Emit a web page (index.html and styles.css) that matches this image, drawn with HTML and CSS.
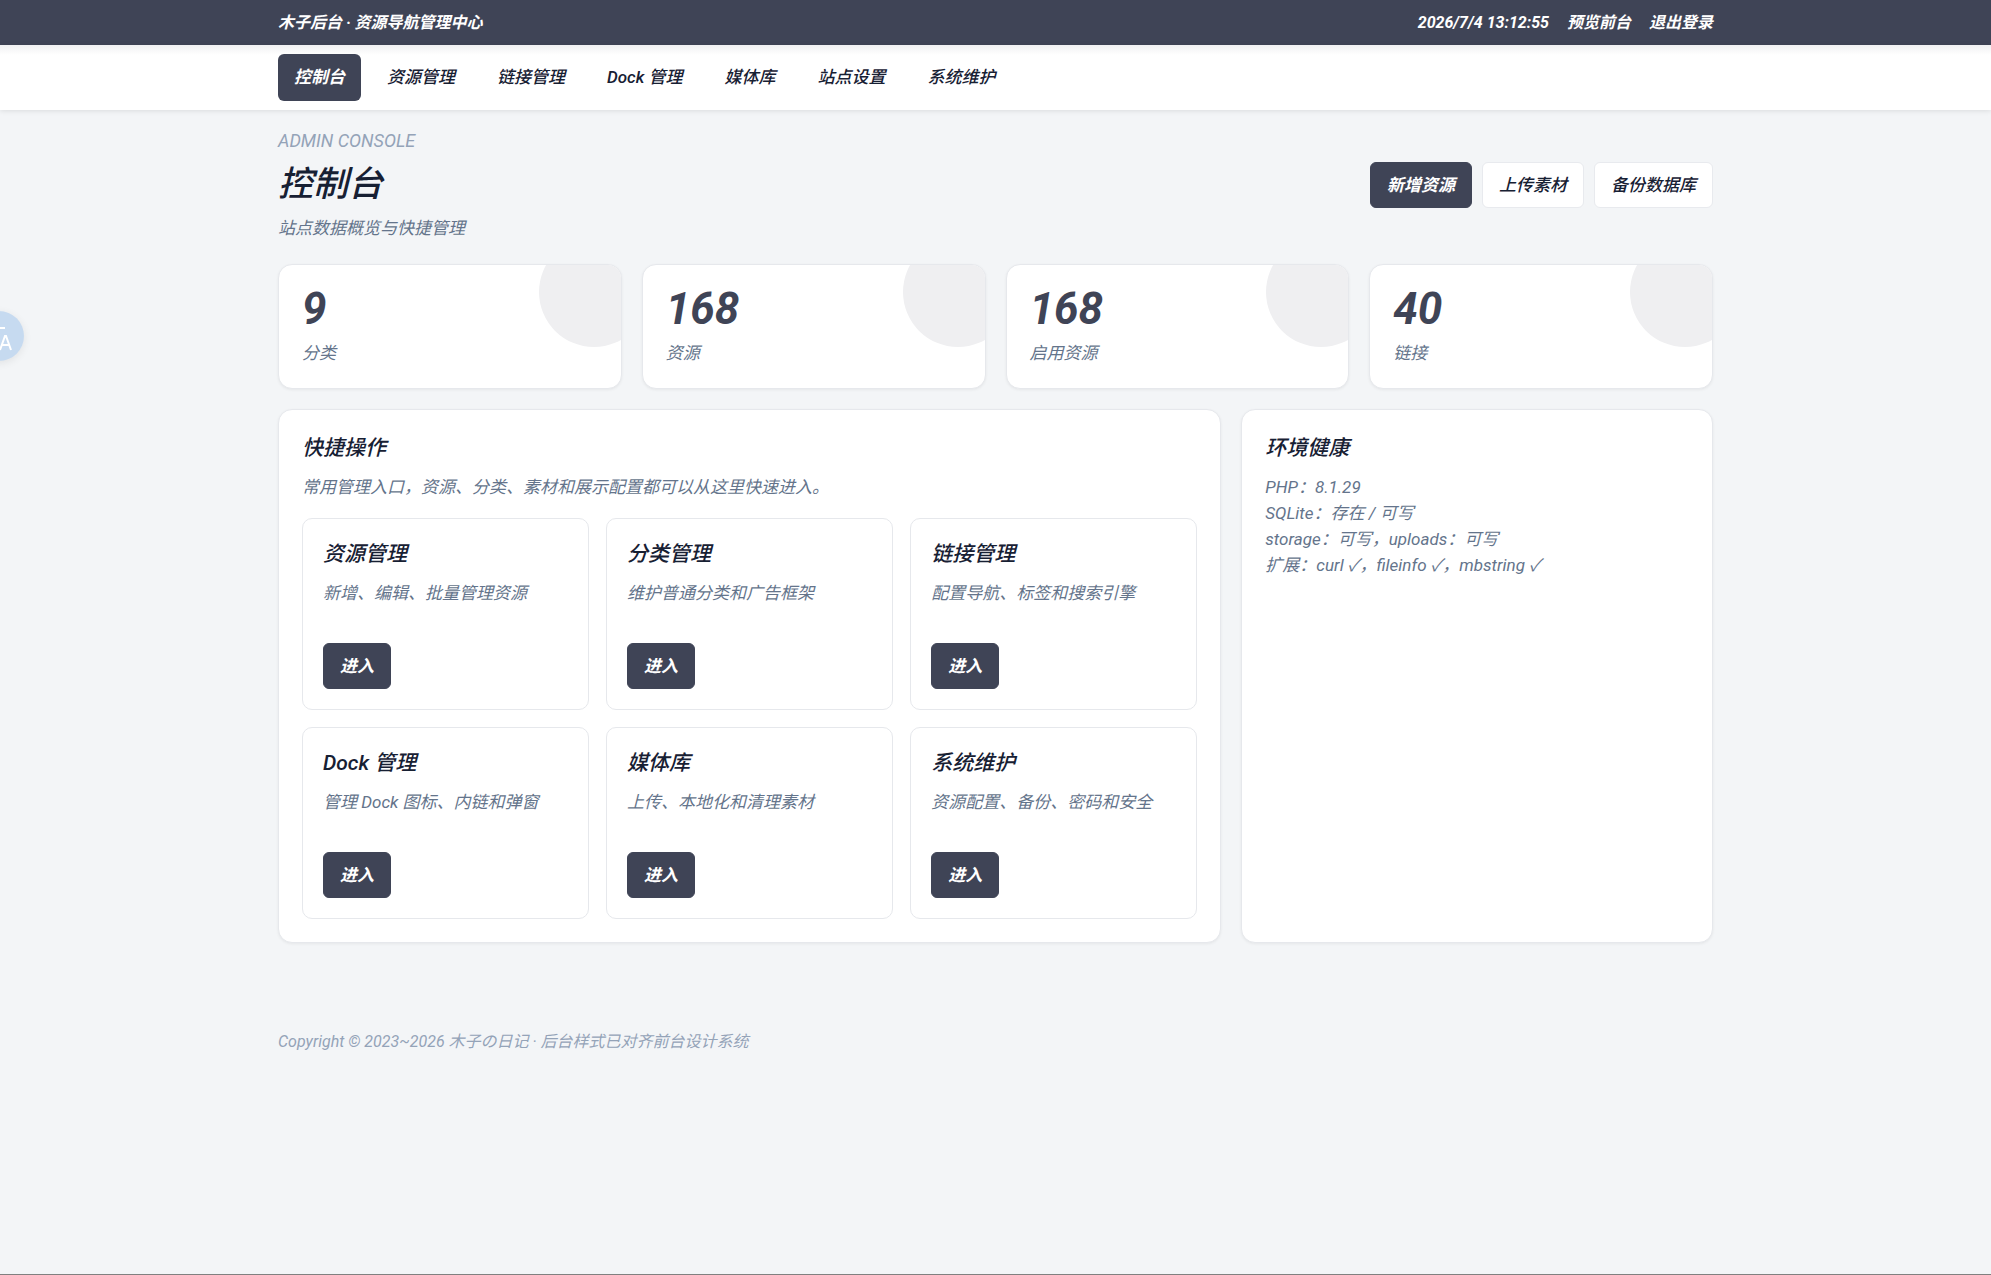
FILE: index.html
```html
<!DOCTYPE html>
<html lang="zh-CN">
<head>
    <meta charset="UTF-8">
    <meta name="viewport" content="width=device-width, initial-scale=1.0">
    <title>控制台 - 木子后台</title>
    <link rel="stylesheet" href="styles.css">
</head>
<body>

<div class="topbar">
    <div class="container topbar-inner">
        <span>木子后台 · 资源导航管理中心</span>
        <div class="topbar-right">
            <span>2026/7/4 13:12:55</span>
            <a href="#">预览前台</a>
            <a href="#">退出登录</a>
        </div>
    </div>
</div>

<header class="navbar">
    <nav class="container nav">
        <a class="active" href="#">控制台</a>
        <a href="#">资源管理</a>
        <a href="#">链接管理</a>
        <a href="#">Dock 管理</a>
        <a href="#">媒体库</a>
        <a href="#">站点设置</a>
        <a href="#">系统维护</a>
    </nav>
</header>

<main class="container main">
    <div class="page-head">
        <div>
            <div class="eyebrow">ADMIN CONSOLE</div>
            <h1>控制台</h1>
            <p class="muted">站点数据概览与快捷管理</p>
        </div>
        <div class="actions">
            <button class="btn btn-primary">新增资源</button>
            <button class="btn">上传素材</button>
            <button class="btn">备份数据库</button>
        </div>
    </div>

    <section class="stats">
        <div class="card stat"><strong>9</strong><span class="muted">分类</span></div>
        <div class="card stat"><strong>168</strong><span class="muted">资源</span></div>
        <div class="card stat"><strong>168</strong><span class="muted">启用资源</span></div>
        <div class="card stat"><strong>40</strong><span class="muted">链接</span></div>
    </section>

    <section class="panels">
        <div class="card panel">
            <h2>快捷操作</h2>
            <p class="muted">常用管理入口，资源、分类、素材和展示配置都可以从这里快速进入。</p>
            <div class="quick-grid">
                <div class="quick">
                    <h2>资源管理</h2>
                    <p class="muted">新增、编辑、批量管理资源</p>
                    <button class="btn btn-primary">进入</button>
                </div>
                <div class="quick">
                    <h2>分类管理</h2>
                    <p class="muted">维护普通分类和广告框架</p>
                    <button class="btn btn-primary">进入</button>
                </div>
                <div class="quick">
                    <h2>链接管理</h2>
                    <p class="muted">配置导航、标签和搜索引擎</p>
                    <button class="btn btn-primary">进入</button>
                </div>
                <div class="quick">
                    <h2>Dock 管理</h2>
                    <p class="muted">管理 Dock 图标、内链和弹窗</p>
                    <button class="btn btn-primary">进入</button>
                </div>
                <div class="quick">
                    <h2>媒体库</h2>
                    <p class="muted">上传、本地化和清理素材</p>
                    <button class="btn btn-primary">进入</button>
                </div>
                <div class="quick">
                    <h2>系统维护</h2>
                    <p class="muted">资源配置、备份、密码和安全</p>
                    <button class="btn btn-primary">进入</button>
                </div>
            </div>
        </div>
        <div class="card panel">
            <h2>环境健康</h2>
            <p class="muted">
                PHP：8.1.29<br>
                SQLite：存在 / 可写<br>
                storage：可写，uploads：可写<br>
                扩展：curl ✓，fileinfo ✓，mbstring ✓
            </p>
        </div>
    </section>
</main>

<footer class="container footer">Copyright © 2023~2026 木子の日记 · 后台样式已对齐前台设计系统</footer>

<button class="translate" aria-label="翻译">
    <svg width="50" height="50" viewBox="0 0 50 50" fill="none" stroke="#fff" stroke-width="2">
        <path d="M13 17h18M22 13v4M25 17c-2 6-5 9-10 12M17 21c2 4 4 6 7 8"/>
        <path d="M26 39l5-14h1l5 14M28 34h7"/>
    </svg>
</button>

</body>
</html>
```
FILE: styles.css
```css
* {
    box-sizing: border-box;
}

body {
    margin: 0;
    min-height: 100vh;
    background-color: #f3f5f7;
    border-bottom: 1px solid #808080;
    color: #172033;
    font-family: Roboto, "Noto Sans CJK SC", sans-serif;
    font-size: 17px;
    font-style: italic;
    font-weight: 500;
    line-height: 26px;
}

a {
    color: inherit;
    text-decoration: none;
}

h1, h2, p {
    margin: 0;
    font-weight: 500;
}

h1 {
    margin: 9px 0 8px;
    font-size: 35px;
    line-height: 44px;
}

h2 {
    margin-bottom: 10px;
    font-size: 21px;
    line-height: 31px;
}

.container {
    width: 100%;
    max-width: 1435px;
    margin: 0 auto;
}

.muted {
    color: #64748b;
    font-weight: 400;
}

/* Barra superiore */
.topbar {
    background-color: #3f4456;
    color: #fff;
    font-size: 16px;
    font-weight: 700;
}

.topbar-inner {
    display: flex;
    justify-content: space-between;
    align-items: center;
    height: 45px;
}

.topbar-right {
    display: flex;
    gap: 18px;
}

.navbar {
    background: linear-gradient(#f0f0f2, #fff 10px);
    box-shadow: 0 1px 5px rgba(0, 0, 0, 0.1);
}

.nav {
    display: flex;
    gap: 10px;
    padding: 9px 0;
}

.nav a {
    padding: 10px 16px;
    border-radius: 6px;
    line-height: 27px;
}

.nav .active {
    background-color: #3f4456;
    color: #fff;
    font-weight: 700;
}

.main {
    padding-top: 18px;
}

.page-head {
    display: flex;
    justify-content: space-between;
    align-items: center;
    margin-bottom: 23px;
}

.eyebrow {
    color: #94a3b8;
    font-size: 18px;
    font-weight: 400;
}

.actions {
    display: flex;
    gap: 10px;
}

.btn {
    padding: 9px 16px;
    border: 1px solid #e8eaee;
    border-radius: 6px;
    background-color: #fff;
    color: inherit;
    font: inherit;
    cursor: pointer;
}

.btn-primary {
    border-color: #3f4456;
    background-color: #3f4456;
    color: #fff;
    font-weight: 700;
}

.card {
    border: 1px solid #e6e8ec;
    border-radius: 14px;
    background-color: #fff;
    box-shadow: 0 1px 3px rgba(0, 0, 0, 0.06);
}

.stats {
    display: grid;
    grid-template-columns: repeat(4, 1fr);
    gap: 20px;
    margin-bottom: 20px;
}

.stat {
    position: relative;
    overflow: hidden;
    padding: 21px 23px 22px;
}

.stat::after {
    content: "";
    position: absolute;
    top: -28px;
    right: -28px;
    width: 110px;
    height: 110px;
    border-radius: 50%;
    background-color: #efeff1;
}

.stat strong {
    display: block;
    margin-bottom: 7px;
    color: #3f4456;
    font-size: 44px;
    line-height: 47px;
}

.stat span {
    display: block;
}

.panels {
    display: grid;
    grid-template-columns: 2fr 1fr;
    gap: 20px;
}

.panel {
    padding: 23px;
}

.quick-grid {
    display: grid;
    grid-template-columns: repeat(3, 1fr);
    gap: 17px;
    margin-top: 18px;
}

.quick {
    padding: 20px;
    border: 1px solid #e6e8ec;
    border-radius: 10px;
}

.quick .btn {
    margin-top: 37px;
}

.footer {
    margin-top: 86px;
    color: #94a3b8;
    font-size: 16px;
    font-weight: 400;
}

/* Pulsante di traduzione sul bordo */
.translate {
    position: fixed;
    top: 311px;
    left: -26px;
    width: 50px;
    height: 50px;
    padding: 0;
    border: none;
    border-radius: 50%;
    background-color: #c6daf0;
    box-shadow: 0 2px 8px rgba(0, 0, 0, 0.08);
}
```
